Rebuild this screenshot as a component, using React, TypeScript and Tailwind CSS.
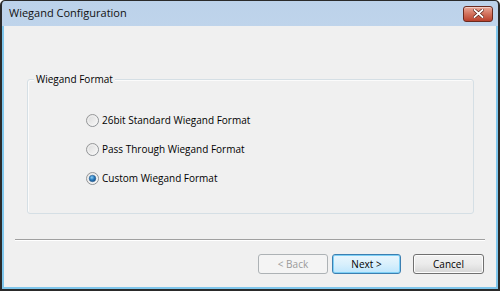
import React from "react";

function Radio({ checked }: { checked?: boolean }) {
  return (
    <svg width="13" height="13" viewBox="0 0 13 13" className="shrink-0">
      <defs>
        <linearGradient id="rb" x1="0" y1="0" x2="1" y2="1">
          <stop offset="0" stopColor="#9a9a9a" />
          <stop offset="1" stopColor="#8a8f94" />
        </linearGradient>
        <linearGradient id="rf" x1="0" y1="0" x2="1" y2="1">
          <stop offset="0" stopColor="#d8d8d8" />
          <stop offset="1" stopColor="#fbfbfb" />
        </linearGradient>
        <radialGradient id="rd" cx="0.4" cy="0.35" r="0.7">
          <stop offset="0" stopColor="#8fd0f5" />
          <stop offset="0.5" stopColor="#2a7dc0" />
          <stop offset="1" stopColor="#134b84" />
        </radialGradient>
      </defs>
      <circle cx="6.5" cy="6.5" r="6" fill="url(#rf)" stroke="url(#rb)" strokeWidth="1" />
      <circle cx="6.5" cy="6.5" r="4.6" fill="none" stroke="#f4f4f4" strokeWidth="0.8" />
      {checked && <circle cx="6.5" cy="6.5" r="3.3" fill="url(#rd)" stroke="#2c5f8e" strokeWidth="0.5" />}
    </svg>
  );
}

function CloseButton() {
  return (
    <div className="flex h-[16px] w-[30px] items-center justify-center rounded-[3px] border border-[#6b2a1e] bg-gradient-to-b from-[#e9a898] via-[#d2715c] to-[#b9402c] shadow-[inset_0_1px_0_rgba(255,255,255,0.45)]">
      <svg width="11" height="9" viewBox="0 0 11 9">
        <path d="M1.5 1 L9.5 8 M9.5 1 L1.5 8" stroke="#5a2016" strokeWidth="3.2" strokeLinecap="square" />
        <path d="M1.5 1 L9.5 8 M9.5 1 L1.5 8" stroke="#ffffff" strokeWidth="1.8" strokeLinecap="square" />
      </svg>
    </div>
  );
}

function Option({ label, checked }: { label: string; checked?: boolean }) {
  return (
    <div className="flex h-[18px] items-center gap-[3px]">
      <Radio checked={checked} />
      <span>{label}</span>
    </div>
  );
}

export default function App() {
  return (
    <div
      className="h-[291px] w-[500px] bg-white text-[10px] text-black"
      style={{ fontFamily: '"Open Sans", "Liberation Sans", sans-serif' }}
    >
      <div className="flex h-[291px] w-[500px] flex-col rounded-tl-[5px] rounded-tr-[5px] border-x-2 border-t border-b-2 border-[#2a2a2a] bg-gradient-to-b from-[#bcd2ea] to-[#dbe8f5]">
        <div className="flex h-[25px] shrink-0 items-center justify-between pl-[7px] pr-[5px]">
          <span className="text-[11px] text-[#111]">Wiegand Configuration</span>
          <CloseButton />
        </div>
        <div className="flex flex-1 flex-col border-x-2 border-b-2 border-[#7fc6ec] bg-[#f0f0f0]">
          <div className="relative ml-[23px] mt-[53px] h-[135px] w-[447px] rounded-[3px] border border-[#d5dfe5] shadow-[inset_1px_1px_0_#fbfbfb]">
            <span className="absolute -top-[8px] left-[6px] bg-[#f0f0f0] px-[2px] leading-[14px]">
              Wiegand Format
            </span>
            <div className="flex flex-col gap-[11px] pl-[58px] pt-[31px]">
              <Option label="26bit Standard Wiegand Format" />
              <Option label="Pass Through Wiegand Format" />
              <Option label="Custom Wiegand Format" checked />
            </div>
          </div>
          <div className="ml-[11px] mt-[25px] w-[470px] border-t border-b border-t-[#a0a0a0] border-b-[#ffffff]" />
          <div className="mt-[13px] flex justify-end pr-[12px]">
            <div className="flex h-[20px] w-[70px] items-center justify-center rounded-[3px] border border-[#adb2b5] bg-[#f4f4f4] text-[#9a9a9a]">
              &lt; Back
            </div>
            <div className="ml-[4px] flex h-[20px] w-[69px] items-center justify-center rounded-[3px] border border-[#3c7fb1] bg-gradient-to-b from-[#eaf6fd] via-[#d9f0fc] to-[#bee6fd] shadow-[inset_0_0_0_1px_#7ed0f6]">
              Next &gt;
            </div>
            <div className="ml-[12px] flex h-[20px] w-[71px] items-center justify-center rounded-[3px] border border-[#707070] bg-gradient-to-b from-[#f2f2f2] via-[#ebebeb] to-[#d6d6d6] shadow-[inset_0_0_0_1px_#fcfcfc]">
              Cancel
            </div>
          </div>
        </div>
      </div>
    </div>
  );
}
